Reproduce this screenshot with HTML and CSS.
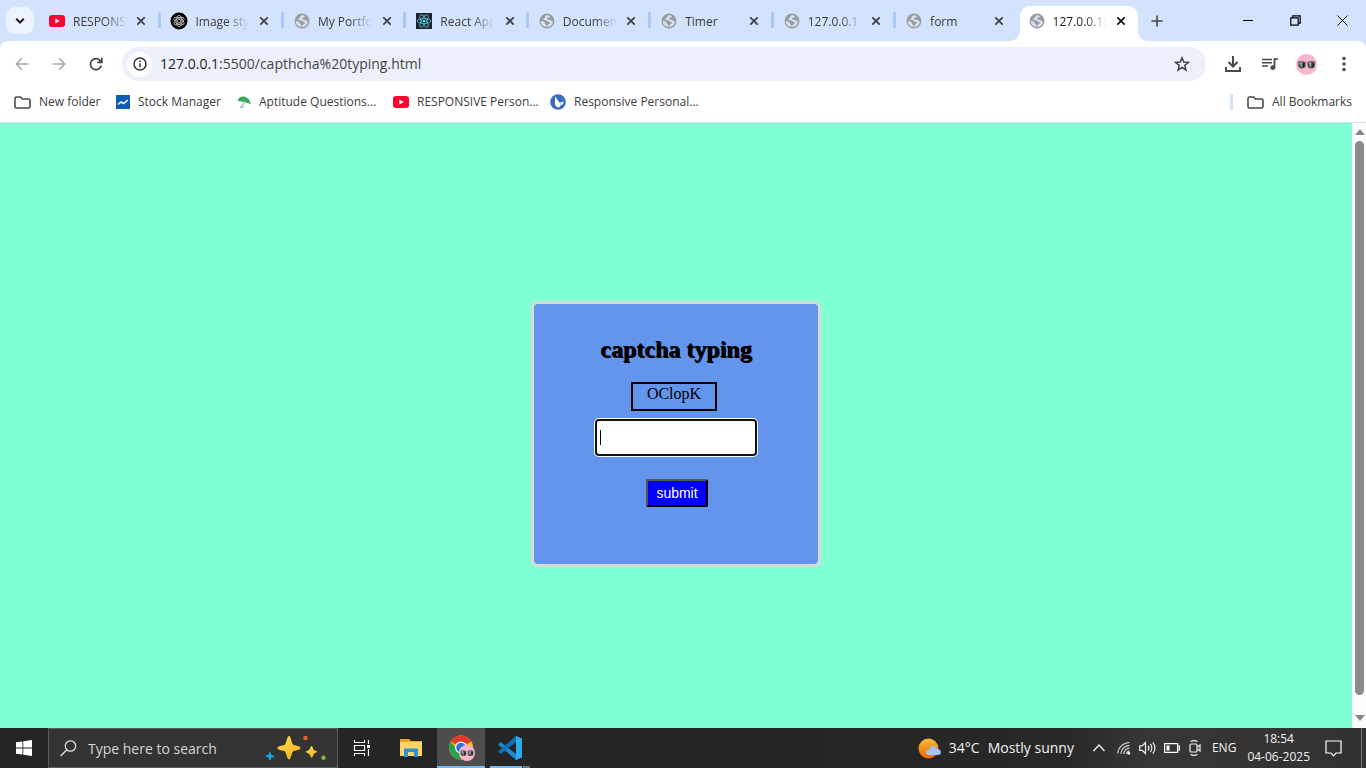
FILE: index.html
```
<!DOCTYPE html>
<html lang="en">
<head>
<meta charset="utf-8">
<title>captcha typing</title>
<link rel="stylesheet" href="styles.css">
</head>
<body>
<svg class="defs" aria-hidden="true">
  <symbol id="globe" viewBox="0 0 16 16"><circle cx="8" cy="8" r="7.5" fill="#989da2"/><path d="M9 2.2c-1.800 0-2.600.6-2.800 1.800-.3 1.600-1.900.8-1.900 2.300 0 1 1.700 1.100 2.900 1.100 1.300 0 1.500 1.900 3.300 1.900 1 0 .4 1.300-.4 1.500-1.300.3-1.300 2.700-2.900 3.200 4 .3 6.700-2.700 6.700-5.600-1.300.2-1.500-1.400-3.100-1.400-1.800 0-2.700-.3-2.700-1.400 0-1.300 2.700-.7 2.700-2 0-.6-.8-1.100-1.800-1.400z" fill="#d7e1f0"/><path d="M1.800 8.300c1.700-.2 3.900.4 3.900 1.900 0 1 1.500.8 1.500 1.900v1.800C4 13.700 1.800 11.400 1.800 8.300z" fill="#d7e1f0"/></symbol>
  <symbol id="cross" viewBox="0 0 10 10"><path d="M1.300 1.300l7.400 7.400M8.700 1.300L1.300 8.700" stroke="currentColor" stroke-width="1.700"/></symbol>
  <symbol id="youtube" viewBox="0 0 16 12"><rect width="16" height="12" rx="3" fill="#ff0033"/><path d="M6.300 3.500v5L10.800 6z" fill="#fff"/></symbol>
  <symbol id="folder" viewBox="0 0 17 13"><path d="M1 2.500C1 1.500 1.500 1 2.500 1h4l2 2h6c1 0 1.500.5 1.500 1.500v6c0 1-.5 1.500-1.500 1.500h-12C1.500 12 1 11.500 1 10.500z" fill="none" stroke="#4a4a4a" stroke-width="1.600"/></symbol>
  <symbol id="shades" viewBox="0 0 20 20"><circle cx="10" cy="10" r="10" fill="#f8b6cc"/><circle cx="5.600" cy="10.200" r="3.600" fill="#55595a"/><circle cx="14.400" cy="10.200" r="3.600" fill="#55595a"/><path d="M1 8.200c2.500-1.800 5.500-1.500 9 .2 3.500-1.700 6.500-2 9-.2" fill="none" stroke="#8c6f78" stroke-width=".9"/><path d="M3.500 8.500l2-.8v5zM12.300 8.500l2-.8v5z" fill="#b3b9b5"/><path d="M6.500 8.500l2 .2-.4 3.300-1.600 1zM15.500 8.500l2 .2-.4 3.300-1.600 1z" fill="#202325"/></symbol>
</svg>

<header class="browser">
  <div class="tabstrip">
    <button class="tab-search" aria-label="Search tabs"><svg width="10" height="8" viewBox="0 0 10 8"><path d="M1.200 1.700L5 5.500l3.800-3.800" fill="none" stroke="#1f1f1f" stroke-width="2"/></svg></button>
    <div class="tabs">
      <div class="tab"><svg class="favicon"><use href="#youtube"/></svg><span class="title">RESPONS</span><button class="close" aria-label="Close"><svg><use href="#cross"/></svg></button></div>
      <div class="tab"><svg class="favicon" viewBox="0 0 16 16"><circle cx="8" cy="8" r="8.500"/><g fill="none" stroke="#bdbdbd" stroke-width=".9"><ellipse cx="8" cy="8" rx="3" ry="5.600"/><ellipse cx="8" cy="8" rx="3" ry="5.600" transform="rotate(60 8 8)"/><ellipse cx="8" cy="8" rx="3" ry="5.600" transform="rotate(120 8 8)"/><circle cx="8" cy="8" r="1.800"/></g></svg><span class="title">Image sty</span><button class="close" aria-label="Close"><svg><use href="#cross"/></svg></button></div>
      <div class="tab"><svg class="favicon"><use href="#globe"/></svg><span class="title">My Portfo</span><button class="close" aria-label="Close"><svg><use href="#cross"/></svg></button></div>
      <div class="tab"><svg class="favicon" viewBox="0 0 16 16"><path d="M0 0h16v16H0z" fill="#20232a"/><g fill="none" stroke="#4fa9bf" stroke-width="1"><ellipse cx="8" cy="8" rx="2.600" ry="6.800" transform="rotate(30 8 8)"/><ellipse cx="8" cy="8" rx="2.600" ry="6.800" transform="rotate(90 8 8)"/><ellipse cx="8" cy="8" rx="2.600" ry="6.800" transform="rotate(150 8 8)"/></g><circle cx="8" cy="8" r="1.300" fill="#61dafb"/></svg><span class="title">React App</span><button class="close" aria-label="Close"><svg><use href="#cross"/></svg></button></div>
      <div class="tab"><svg class="favicon"><use href="#globe"/></svg><span class="title">Documen</span><button class="close" aria-label="Close"><svg><use href="#cross"/></svg></button></div>
      <div class="tab"><svg class="favicon"><use href="#globe"/></svg><span class="title">Timer</span><button class="close" aria-label="Close"><svg><use href="#cross"/></svg></button></div>
      <div class="tab"><svg class="favicon"><use href="#globe"/></svg><span class="title">127.0.0.1:</span><button class="close" aria-label="Close"><svg><use href="#cross"/></svg></button></div>
      <div class="tab"><svg class="favicon"><use href="#globe"/></svg><span class="title">form</span><button class="close" aria-label="Close"><svg><use href="#cross"/></svg></button></div>
      <div class="tab active"><svg class="favicon"><use href="#globe"/></svg><span class="title">127.0.0.1:</span><button class="close" aria-label="Close"><svg><use href="#cross"/></svg></button></div>
    </div>
    <button class="new-tab" aria-label="New tab"><svg width="12" height="12"><path d="M6 .5v11M.5 6h11" stroke="#444" stroke-width="1.600"/></svg></button>
    <div class="window-controls">
      <button aria-label="Minimize"><svg width="11" height="11"><path d="M0 5.500h10" stroke="#000"/></svg></button>
      <button aria-label="Restore"><svg width="11" height="11" fill="none" stroke="#000" stroke-width="1.200"><path d="M.8 2.800h7.400v7.400H.8zM2.800 2.500V.8h7.400v7.400H8.500"/></svg></button>
      <button aria-label="Close window"><svg width="11" height="11"><path d="M.5.500l10 10M10.500.500l-10 10" stroke="#111"/></svg></button>
    </div>
  </div>

  <div class="toolbar">
    <div class="nav">
      <button aria-label="Back"><svg width="14" height="14" fill="none" stroke="#a8a8a8" stroke-width="1.500"><path d="M13.500 7H1.500M7 1.200L1.300 7 7 12.800"/></svg></button>
      <button aria-label="Forward"><svg width="14" height="14" fill="none" stroke="#a8a8a8" stroke-width="1.500"><path d="M.5 7h12M7 1.200L12.700 7 7 12.800"/></svg></button>
      <button aria-label="Reload"><svg width="14" height="14" fill="none" stroke="#444" stroke-width="1.700"><path d="M12.300 8.500A5.500 5.500 0 1 1 11.500 4L12.800 5.200M12.800.8v4.600H8.200"/></svg></button>
    </div>
    <div class="omnibox">
      <button class="site-info" aria-label="Site information"><svg width="14" height="14"><circle cx="7" cy="7" r="6" fill="none" stroke="#333" stroke-width="1.500"/><path d="M7 6.200v4M7 3.500v1.500" stroke="#333" stroke-width="1.500"/></svg></button>
      <a class="url" href="#page"><span class="host">127.0.0.1</span>:5500/capthcha%20typing.html</a>
      <button class="star" aria-label="Bookmark this tab"><svg width="16" height="16" viewBox="0 0 16 16"><path d="M8 1.800l1.700 4.300 4.700.3-3.600 3 1.100 4.500L8 11.500l-3.900 2.400 1.100-4.500-3.600-3 4.700-.3z" fill="none" stroke="#444" stroke-width="1.500"/></svg></button>
    </div>
    <div class="actions">
      <button aria-label="Downloads"><svg width="18" height="18" fill="none" stroke="#4a4a4a" stroke-width="2"><path d="M9 1v10M4.500 7L9 11.500 13.500 7M2 12v4h14v-4"/></svg></button>
      <button aria-label="Media"><svg width="18" height="18" viewBox="0 0 18 18"><path d="M1 4.500h10M1 7.800h10M1 11h6" stroke="#4a4a4a" stroke-width="1.500"/><path d="M13.500 13V4.200h3.300" fill="none" stroke="#4a4a4a" stroke-width="1.800"/><circle cx="11.800" cy="12.700" r="2.400" fill="#4a4a4a"/></svg></button>
      <button aria-label="Profile"><svg width="21" height="21"><use href="#shades"/></svg></button>
      <button aria-label="Menu"><svg width="4" height="16" fill="#444"><circle cx="2" cy="2.500" r="1.700"/><circle cx="2" cy="8" r="1.700"/><circle cx="2" cy="13.500" r="1.700"/></svg></button>
    </div>
  </div>

  <nav class="bookmarks">
    <a href="#page" class="bm-folder"><svg width="17" height="13"><use href="#folder"/></svg>New folder</a>
    <a href="#page" class="bm-stock"><svg width="14" height="14"><path d="M0 0h14v14H0z" fill="#0f5cb3"/><path d="M2 9.500l3-2.500 2.500 1.500L12 5" stroke="#fff" stroke-width="1.500" fill="none"/></svg>Stock Manager</a>
    <a href="#page" class="bm-apt"><svg width="14" height="14"><path d="M.5 6.500C1 2.500 5 .5 8.500 2c3.500 1.300 5 4.500 5 7.500-1.300-1.400-2.300-1.800-3.800-1.500C8 6.500 6.500 6 4.800 7 3.500 5.800 2 5.800.5 6.500z" fill="#3ba55b"/><path d="M7.200 6.500L5.500 11.500c-.5 1.500-2.300 1-1.800-.3" fill="none" stroke="#8bb99b" stroke-width="1.200"/></svg>Aptitude Questions...</a>
    <a href="#page" class="bm-tube"><svg width="16" height="12"><use href="#youtube"/></svg>RESPONSIVE Person...</a>
    <a href="#page" class="bm-personal"><svg width="16" height="16"><circle cx="8" cy="8" r="7.800" fill="#386bc2"/><path d="M5 2.500v8.500l2.500 2.500c2 0 3.200-1.200 3.500-3zM10 8.500l3.500-1c0 2-.5 3-2 3.500z" fill="#fff"/></svg>Responsive Personal...</a>
    <a href="#page" class="bm-all"><svg width="17" height="13"><use href="#folder"/></svg>All Bookmarks</a>
  </nav>
</header>

<div class="viewport">
  <main class="page" id="page">
    <form class="card">
      <h2>captcha typing</h2>
      <div class="code">OClopK</div>
      <input class="answer" type="text" aria-label="Captcha">
      <button class="submit" type="button">submit</button>
    </form>
  </main>
  <div class="scrollbar">
    <svg width="10" height="6"><path d="M0 6L5 0l5 6z" fill="#858585"/></svg>
    <div class="thumb"></div>
    <svg width="10" height="6"><path d="M0 0l5 6 5-6z" fill="#858585"/></svg>
  </div>
</div>

<footer class="taskbar">
  <button class="start" aria-label="Start"><svg width="16" height="16" fill="#fff"><path d="M0 2.300l6.500-.9v6.200H0zM7.300 1.300L16 0v7.600H7.300zM0 8.400h6.500v6.200L0 13.700zM7.300 8.400H16V16l-8.700-1.300z"/></svg></button>
  <label class="search">
    <svg width="17" height="17" fill="none" stroke="#e4e4e4" stroke-width="1.300"><circle cx="10.500" cy="6" r="5.200"/><path d="M6.800 9.800L.7 16"/></svg>
    <input type="text" placeholder="Type here to search" aria-label="Type here to search">
    <svg width="62" height="28" viewBox="0 0 62 28"><defs><linearGradient id="gold" x2="1" y2="1"><stop stop-color="#ffe45c"/><stop offset="1" stop-color="#f6a90c"/></linearGradient></defs><path d="M24 2c2 0 2.500 7 4 8.500S35.500 11.500 35.500 14s-6 2-7.500 3.500S26 25.500 24 25.500s-2.500-6.500-4-8S12.500 16.500 12.500 14s6-2 7.500-3.500S22 2 24 2z" fill="url(#gold)"/><path d="M46.500 12c1.200 0 1.500 3.300 2.500 4s3 .5 3 1.700-2.300 1-3 2-1 3.800-2.300 3.800-1.400-2.800-2.200-3.600S41 19 41 17.700s2.500-1 3.300-2S45.500 12 46.500 12z" fill="url(#gold)"/><path d="M5 18c1.300.3.600 2.500 1.500 3s2.700.2 2.500 1.500-2.500.7-3 1.500 0 2.500-1.300 2.300-.6-2.500-1.400-3-2.800-.2-2.500-1.500 2.400-.6 2.900-1.400S3.900 17.900 5 18z" fill="#18a8ea"/><circle cx="40.500" cy="4" r="2.300" fill="#e9562b"/><circle cx="58.500" cy="23.800" r="2.200" fill="#84bd37"/></svg>
  </label>
  <div class="apps">
    <button aria-label="Task View"><svg width="17" height="16" fill="none" stroke="#f2f2f2" stroke-width="1.200"><path d="M1.500 0v2.500h10V0M1.500 16v-2.500h10V16M1.500 5.500h10v5h-10zM15.500 0v4M15.500 9v7"/><path d="M14 5h3v3h-3z" fill="#fff" stroke="none"/></svg></button>
    <button aria-label="File Explorer"><svg width="22" height="20"><path d="M0 1h9l2 2h11v15H0z" fill="#e9a520"/><path d="M0 4h22v14H0z" fill="#fbd568"/><path d="M4 19v-8.500h14V19h-4v-5H8v5z" fill="#3290d8"/></svg></button>
    <button class="running current" aria-label="Chrome"><svg width="27" height="26"><circle cx="13" cy="12.500" r="12" fill="#fbc116"/><path d="M13 12.500L2.600 6.500A12 12 0 0 1 23.400 6.500z" fill="#e33b2e"/><path d="M13 .5A12 12 0 0 1 23.400 7H11z" fill="#e33b2e"/><path d="M2.600 6.500A12 12 0 0 0 13 24.500l5-9-9-1z" fill="#2da14c"/><circle cx="13" cy="12.500" r="6" fill="#fff"/><circle cx="13" cy="12.500" r="4.800" fill="#3474e0"/><svg x="11" y="10" width="16" height="16"><use href="#shades"/></svg></svg></button>
    <button class="running stacked" aria-label="Visual Studio Code"><svg width="24" height="24"><path d="M18 0l6 2.800v18.400L18 24 0 8.500 2.500 6 18 18z" fill="#168bd2"/><path d="M18 0v6L2.500 18 0 15.500z" fill="#0d70b8"/><path d="M18 0l6 2.800v18.400L18 24z" fill="#2eaaf0"/></svg></button>
  </div>
  <div class="tray">
    <button class="weather"><svg width="23" height="21"><defs><linearGradient id="sun" x2="0" y2="1"><stop stop-color="#f8bd3b"/><stop offset="1" stop-color="#ed6506"/></linearGradient></defs><circle cx="10.500" cy="10.500" r="10" fill="url(#sun)"/><path d="M11 17c-4 0-4-5 0-5 1-5 7-5 8-1 5 0 5 6 1 6z" fill="#a5c3fb"/></svg><span>34°C</span><span>Mostly sunny</span></button>
    <div class="status">
      <svg class="expand" width="14" height="10" fill="none" stroke="#f0f0f0" stroke-width="1.400"><path d="M1.500 8L7 2l5.500 6"/></svg>
      <svg width="14" height="14" fill="none" stroke="#d0d0d0" stroke-width="1.200"><path d="M.7 12.500C1 6.500 6 1.800 12.500 1.500M3.700 13c.3-4.500 4-8.500 8.800-8.700M6.700 13c.3-3 2.700-5.700 5.800-5.900M9.500 13c.3-1.500 1.500-3 3-3.200"/><circle cx="11.800" cy="12.300" r="1.400" fill="#fff" stroke="none"/></svg>
      <svg width="17" height="14" fill="none" stroke="#efefef" stroke-width="1.200"><path d="M.7 4.800h2.500L6.500 1.500v11L3.200 9.300H.7zM9 4.800c1 1.300 1 3.200 0 4.500M11.300 3c2 2.300 2 5.800 0 8M13.700 1.300c3 3.200 3 8.200 0 11.400"/></svg>
      <svg width="16" height="10"><path d="M.6.600h13v8.800h-13zM14 3h1.400v4H14" fill="none" stroke="#fff" stroke-width="1.200"/><path d="M2.500 2.500h3v5h-3z" fill="#fff"/></svg>
      <svg width="14" height="16" fill="none" stroke="#efefef" stroke-width="1.200"><rect x="2" y="4" width="7" height="8" rx="1"/><path d="M9.500 7l2.500-2v6L9.500 9M2.500 1.500c2-1 5-1 7 0M2.500 14.500c2 1 5 1 7 0"/></svg>
    </div>
    <span class="lang">ENG</span>
    <time class="clock"><span>18:54</span><span>04-06-2025</span></time>
    <button class="notice" aria-label="Notifications"><svg width="17" height="17" fill="none" stroke="#fff" stroke-width="1.200"><path d="M1 1h15v12h-5l-2.500 2.800L6 13H1z"/></svg></button>
  </div>
</footer>
</body>
</html>
```
FILE: styles.css
```
* { box-sizing: border-box; }
body {
  margin: 0;
  height: 100vh;
  display: flex;
  flex-direction: column;
  overflow: hidden;
  font: 12px/16px "Open Sans", "Noto Sans", sans-serif;
  color: #3c3c3c;
}
button { border: 0; padding: 0; background: none; font: inherit; color: inherit; display: flex; align-items: center; justify-content: center; }
a { color: inherit; text-decoration: none; }
svg { flex: none; display: block; }
.defs { position: absolute; width: 0; height: 0; }

/* Tab strip */
.browser { background: #d3e3fd; flex: none; }
.tabstrip { display: flex; height: 41px; padding-left: 6px; }
.tab-search { width: 28px; height: 27px; margin: 7px 4px 0 0; border-radius: 9px; background: #ecf2fe; flex: none; }
.tabs { flex: 0 1 1102px; display: grid; grid-template-columns: repeat(9, minmax(0, 1fr)); }
.tab { position: relative; display: flex; align-items: center; padding: 0 11px; }
.tab:nth-child(-n+7)::after { content: ""; position: absolute; right: -1px; top: 12px; width: 3px; height: 16px; border-radius: 2px; background: #a8c7fa; }
.favicon { width: 16px; height: 16px; overflow: visible; }
.tab:first-child .favicon { height: 12px; }
.title { flex: 1; margin-left: 8px; padding-top: 2px; white-space: nowrap; -webkit-mask-image: linear-gradient(to right, #000 32px, transparent 54px); mask-image: linear-gradient(to right, #000 32px, transparent 54px); }
.tab:nth-child(6) .title, .tab:nth-child(8) .title { -webkit-mask-image: none; mask-image: none; }
.close { width: 16px; height: 16px; margin-left: 6px; color: #3b3e43; }
.close svg { width: 10px; height: 10px; }
.active { margin: 6px 2px 0; padding: 0 9px 6px; border-radius: 10px 10px 0 0; background: #fff; color: #1f1f1f; }
.active .close { color: #111; }
.active::before, .active::after { content: ""; position: absolute; bottom: 0; width: 10px; height: 10px; }
.active::before { right: 100%; background: radial-gradient(circle at 0 0, transparent 10px, #fff 10px); }
.active::after { left: 100%; background: radial-gradient(circle at 100% 0, transparent 10px, #fff 10px); }
.new-tab { width: 34px; flex: none; }
.window-controls { display: flex; margin-left: auto; }
.window-controls button { width: 47px; }

/* Toolbar */
.toolbar { display: flex; align-items: center; height: 46px; padding: 0 4px 0 10px; background: #fff; border-radius: 8px 8px 0 0; }
.nav { display: flex; gap: 13px; margin-right: 14px; }
.nav button { width: 24px; height: 24px; }
.omnibox { flex: 1; height: 34px; display: flex; align-items: center; padding: 0 16px 0 5px; border-radius: 17px; background: #ecf0fa; }
.site-info { width: 25px; height: 25px; border-radius: 50%; background: #fff; }
.url { flex: 1; margin-left: 8px; font-size: 14px; line-height: 20px; color: #454545; }
.host { color: #1f1f1f; }
.actions { display: flex; align-items: center; margin-left: 8px; }
.actions button { width: 37px; height: 34px; }

/* Bookmarks */
.bookmarks { display: flex; align-items: center; height: 36px; padding: 0 14px 5px; background: #fff; border-bottom: 1px solid #dadfe2; white-space: nowrap; }
.bookmarks a { display: flex; align-items: center; gap: 8px; }
.bm-folder { flex: 0 0 102px; }
.bm-stock { flex: 0 0 121px; }
.bm-apt { flex: 0 0 156px; }
.bm-tube { flex: 0 0 157px; }
.bm-all { margin-left: auto; padding-left: 14px; border-left: 3px solid #d3e3fd; }

/* Page */
.viewport { flex: 1; display: flex; min-height: 0; }
.page { flex: 1; display: flex; justify-content: center; align-items: flex-start; padding-top: 181px; background: aquamarine; font-family: "Liberation Serif", serif; color: #000; }
.card { width: 284px; min-height: 260px; display: flex; flex-direction: column; align-items: center; padding: 31px 0 56px; border-radius: 4px; background: cornflowerblue; box-shadow: 0 0 2px 3px #d8dcd8; }
.card h2 { margin: 0 0 19px; font-size: 24px; line-height: 28px; text-shadow: 1px 1px 0 #000; }
.code { width: 86px; height: 29px; margin-right: 4px; padding: 1px 0 0; border: 2px solid #000; font-size: 16px; line-height: 18px; text-align: center; }
.answer { width: 158px; height: 33px; margin: 10px 0 25px; border: 0; border-radius: 2px; outline: 2px solid #101010; background: #fff linear-gradient(#000, #000) 3px 50% / 1px 15px no-repeat; box-shadow: 0 0 0 3px #fff; }
.submit { width: 62px; height: 28px; margin-left: 2px; border: 2px outset #000; border-radius: 2px; background: #00f; color: #fff; font: 14px "Liberation Sans", sans-serif; }
.scrollbar { width: 14px; flex: none; display: flex; flex-direction: column; align-items: center; gap: 6px; padding: 6px 0 7px 1px; background: #fcfcfc; }
.thumb { flex: 1; width: 9px; margin-bottom: 14px; border-radius: 5px; background: #8b8b8b; }

/* Taskbar */
.taskbar { flex: none; display: flex; height: 40px; background: linear-gradient(to right, #252525 60%, #292827 78%, #373634 84%, #333231); color: #f2f2f2; }
.start { width: 48px; }
.search { flex: 0 1 288px; display: flex; align-items: center; padding: 0 10px 0 11px; border: 1px solid #5b5b5b; background: #333; }
.search input { flex: 1; min-width: 0; margin-left: 11px; padding: 0; border: 0; background: none; font: 14px "Open Sans", sans-serif; color: #fff; }
.search input::placeholder { color: #d5d5d5; opacity: 1; }
.apps { display: flex; gap: 2px; margin-left: -1px; }
.apps button { width: 48px; }
.running { border-bottom: 2px solid #76b9ed; padding-top: 2px; }
.apps .current { background: #4d4d4d; }
.apps .stacked { width: 40px; margin-left: 3px; border-image: linear-gradient(to right, #76b9ed 31px, #303c45 31px, #303c45 32px, #557c9c 32px) 2; }
.tray { display: flex; align-items: center; margin-left: auto; margin-right: 4px; padding-right: 19px; border-right: 1px solid #777; }
.weather { gap: 8px; font-size: 14px; margin-right: 18px; }
.status { display: flex; align-items: center; gap: 8px; margin-right: 10px; }
.expand { margin-right: 3px; }
.lang { margin-right: 11px; }
.clock { display: flex; flex-direction: column; align-items: center; line-height: 18px; margin-right: 15px; }
```
